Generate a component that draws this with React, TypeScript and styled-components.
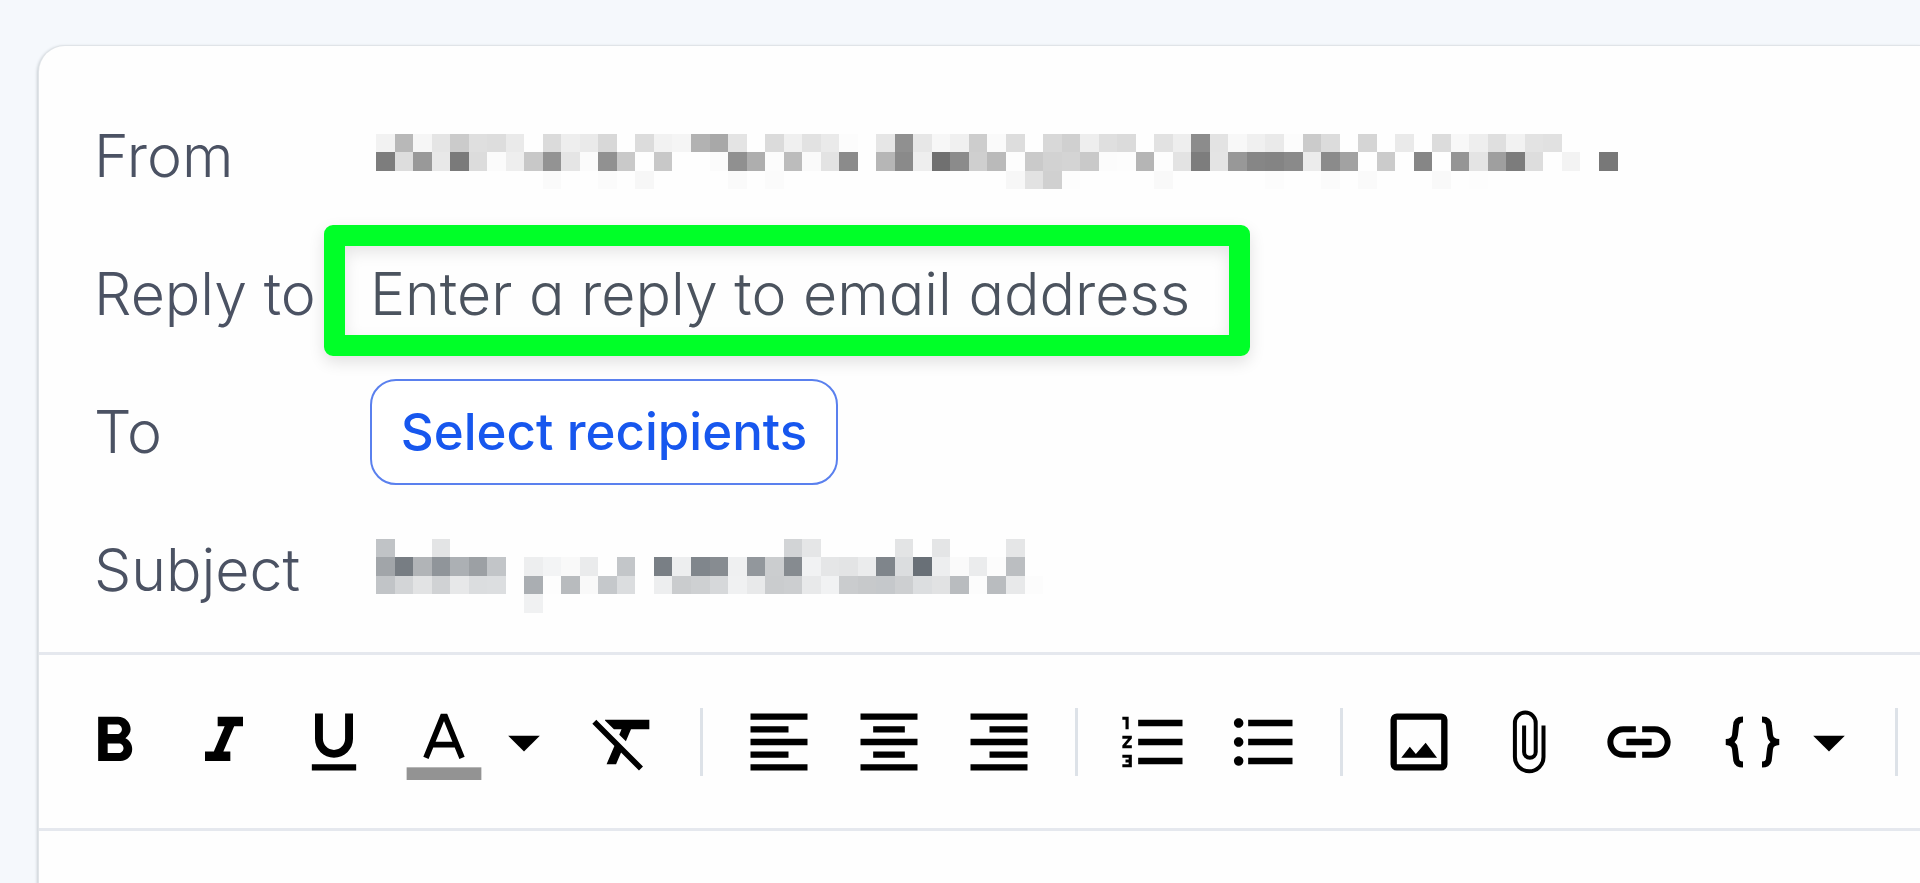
import React from 'react';
import styled, { createGlobalStyle } from 'styled-components';
import {
  MdArrowDropDown,
  MdFormatAlignCenter,
  MdFormatAlignLeft,
  MdFormatAlignRight,
  MdFormatBold,
  MdFormatClear,
  MdFormatItalic,
  MdFormatListBulleted,
  MdFormatListNumbered,
  MdFormatUnderlined,
  MdLink,
} from 'react-icons/md';

const GlobalStyle = createGlobalStyle`
  *, *::before, *::after { box-sizing: border-box; }
  body {
    margin: 0;
    background: #f5f8fc;
    font-family: Inter, "Open Sans", sans-serif;
    font-feature-settings: "cv11";
  }
`;

const Page = styled.main`
  min-height: 100vh;
  padding: 46px 0 0 39px;
  overflow: hidden;
  display: flex;
`;

const Composer = styled.form`
  flex: 1;
  min-width: 0;
  background: #fefefe;
  border-top-left-radius: 26px;
  box-shadow: 0 0 0 1px #e0e4e8, -1px 1px 3px 1px #c8ced3;
`;

const Fields = styled.div`
  padding: 41px 0 13px 55px;
  border-bottom: 3px solid #e5e8ee;
`;

const Field = styled.div`
  display: grid;
  grid-template-columns: 276px 1fr;
  align-items: center;
  height: 138px;
`;

const labelText = `
  font-size: 59px;
  font-weight: 300;
  line-height: 76px;
  white-space: nowrap;
`;

const FieldName = styled.span`
  ${labelText}
  color: #4b5263;
`;

const FieldLabel = styled.label`
  ${labelText}
  color: #4b5263;
`;

const Highlight = styled.div`
  position: relative;
  width: 838px;

  &::after {
    content: "";
    position: absolute;
    inset: -31px -42px -24px -46px;
    border: 21px solid #00ff28;
    border-radius: 9px;
    box-shadow: 0 6px 16px rgba(0, 0, 0, 0.12), inset 0 6px 16px rgba(0, 0, 0, 0.1);
    pointer-events: none;
  }
`;

const ReplyInput = styled.input`
  ${labelText}
  display: block;
  width: 100%;
  height: 76px;
  padding: 0;
  border: 0;
  outline: 0;
  background: transparent;
  font-family: inherit;
  font-feature-settings: inherit;
  color: #4b535e;

  &::placeholder {
    color: #4b535e;
    opacity: 1;
  }
`;

const RecipientsButton = styled.button`
  justify-self: start;
  width: 468px;
  height: 106px;
  padding: 0;
  border: 2px solid #5a80ee;
  border-radius: 26px;
  background: #fff;
  color: #1757ee;
  font-family: inherit;
  font-feature-settings: inherit;
  font-size: 51px;
  font-weight: 500;
  line-height: 64px;
  white-space: nowrap;
`;

const Mosaic = styled.svg`
  display: block;
  margin: 11px 0 0 6px;
`;

const Toolbar = styled.div`
  display: flex;
  align-items: center;
  gap: 34px;
  height: 176px;
  padding-left: 37px;
  overflow: hidden;
  border-bottom: 3px solid #e5e8ee;
`;

const Tool = styled.button`
  display: flex;
  flex: none;
  align-items: center;
  gap: 4px;
  padding: 0;
  border: 0;
  background: transparent;
  color: #000;

  svg {
    flex: none;
    width: 76px;
    height: 76px;
  }
`;

const Picker = styled(Tool)`
  margin-right: -10px;
`;

const Separator = styled.span`
  flex: none;
  width: 3px;
  height: 68px;
  margin: 0 4px;
  background: #dde2e8;
`;

const CELL = 18.53;
const ROW = 18.4;

// Each row lists one two-digit lightness value per cell.
const senderRows = [
  'f2b8f6e5cbdfddeaffdbeeead8ffdcf2f5b2a8e4ffdbf0e2eafcffe690e7f7f0cdfaddffd8d0eedfdbffe2ee8ce3f8f0eafccbdcffd5ffeaffdcf8eedff2e3e1ffffff',
  '7ddd99e87adcfbeec893e5fb91c9ffc8fffffb90aefcbcfae38bffb68aee708bcfbafdcad2d4c9fcfdb5fde37de4988684' +
    '8aec8ba2ffcbff86ff95e49f7cddfff3ff78',
  'fffffffffffffffffffafffffbfff7fffffffffafffbfffffffffffffffffffffffff7e2d0fdfffffffff9fffffffffffcfffffbfffafffffff9fffdffffffffffffff',
];

const subjectRows = [
  'c3ffffe4ffffffffffffffffffffffffffffffffffffd4e6ffffffffe4ffe5ffffffe6ff',
  'a57db495b0a0c5ffeef4f9ebffc6ff7fee868cf097cd8bf2e6e4ec85dd70eefaecfcbeff',
  'c4d5e3d2e8dddeffaefdbbf9c8ddffeeccd0d8f1e9cccee9f2ccc9c8cfdee2bcfcbce9fc',
  'fffffffffffffffff1ffffffffffffffffffffffffffffffffffffffffffffffffffffff',
];

type RedactedProps = { rows: string[]; label: string; cool?: boolean };

function Redacted({ rows, label, cool }: RedactedProps) {
  const columns = rows[0].length / 2;
  const width = Math.round(columns * CELL);
  const height = Math.round(rows.length * ROW);
  return (
    <Mosaic width={width} height={height} role="img" aria-label={label} shapeRendering="crispEdges">
      {rows.flatMap((row, y) =>
        (row.match(/../g) ?? []).map((hex, x) => {
          const v = parseInt(hex, 16);
          if (v > 253) return null;
          const tint = cool ? Math.round((255 - v) / 22) : 0;
          return (
            <rect
              key={`${x}-${y}`}
              x={x * CELL}
              y={y * ROW}
              width={CELL}
              height={ROW}
              fill={`rgb(${v - tint}, ${v}, ${v + tint})`}
            />
          );
        }),
      )}
    </Mosaic>
  );
}

const TextColorIcon = () => (
  <svg viewBox="0 0 24 24" fill="none" aria-hidden="true">
    <path d="M6.3 17 L11.6 4 H12.4 L17.7 17 M8.3 12.8 H15.7" stroke="currentColor" strokeWidth="1.8" />
    <rect x="0.2" y="20" width="23.6" height="4" fill="#939393" />
  </svg>
);

const PictureIcon = () => (
  <svg viewBox="0 0 24 24" fill="none" aria-hidden="true">
    <rect x="4" y="4" width="16" height="16" rx="1" stroke="currentColor" strokeWidth="2" />
    <path d="M6.4 17 L9.1 13.5 L11 15.8 L14.1 12.2 L17.7 17 Z" fill="currentColor" />
  </svg>
);

const PaperclipIcon = () => (
  <svg viewBox="0 0 76 76" fill="none" stroke="currentColor" strokeWidth="4" aria-hidden="true">
    <path d="M52.5 21.5 V53 A14.3 14.3 0 0 1 23.9 53 V19 A10.4 10.4 0 0 1 44.7 19 V48 A5.8 5.8 0 0 1 33.1 48 V21.5" />
  </svg>
);

const BracesIcon = () => (
  <svg viewBox="0 0 76 76" fill="none" stroke="currentColor" strokeWidth="6" aria-hidden="true">
    <path d="M32 15.5 C27 15.5 25 18 25 22 L24 31 C23.6 35 21 37.5 15 38 C21 38.5 23.6 41 24 45 L25 54 C25 58 27 60.5 32 60.5" />
    <path d="M51 15.5 C56 15.5 58 18 58 22 L59 31 C59.4 35 62 37.5 68 38 C62 38.5 59.4 41 59 45 L58 54 C58 58 56 60.5 51 60.5" />
  </svg>
);

type ToolButtonProps = { name: string; children: React.ReactNode };

const ToolButton = ({ name, children }: ToolButtonProps) => (
  <Tool type="button" aria-label={name}>
    {children}
  </Tool>
);

export default function App() {
  return (
    <>
      <GlobalStyle />
      <Page>
        <Composer>
          <Fields>
            <Field>
              <FieldName>From</FieldName>
              <Redacted rows={senderRows} label="Sender hidden" />
            </Field>
            <Field>
              <FieldLabel htmlFor="reply-to">Reply to</FieldLabel>
              <Highlight>
                <ReplyInput id="reply-to" type="email" placeholder="Enter a reply to email address" />
              </Highlight>
            </Field>
            <Field>
              <FieldLabel htmlFor="recipients">To</FieldLabel>
              <RecipientsButton id="recipients" type="button">
                Select recipients
              </RecipientsButton>
            </Field>
            <Field>
              <FieldName>Subject</FieldName>
              <Redacted rows={subjectRows} label="Subject hidden" cool />
            </Field>
          </Fields>
          <Toolbar role="toolbar" aria-label="Formatting">
            <ToolButton name="Bold"><MdFormatBold /></ToolButton>
            <ToolButton name="Italic"><MdFormatItalic /></ToolButton>
            <ToolButton name="Underline"><MdFormatUnderlined /></ToolButton>
            <Picker type="button" aria-label="Text color" aria-haspopup="menu">
              <TextColorIcon />
              <MdArrowDropDown />
            </Picker>
            <ToolButton name="Clear formatting"><MdFormatClear /></ToolButton>
            <Separator />
            <ToolButton name="Align left"><MdFormatAlignLeft /></ToolButton>
            <ToolButton name="Align center"><MdFormatAlignCenter /></ToolButton>
            <ToolButton name="Align right"><MdFormatAlignRight /></ToolButton>
            <Separator />
            <ToolButton name="Numbered list"><MdFormatListNumbered /></ToolButton>
            <ToolButton name="Bulleted list"><MdFormatListBulleted /></ToolButton>
            <Separator />
            <ToolButton name="Insert image"><PictureIcon /></ToolButton>
            <ToolButton name="Attach file"><PaperclipIcon /></ToolButton>
            <ToolButton name="Insert link"><MdLink /></ToolButton>
            <Picker type="button" aria-label="Insert variable" aria-haspopup="menu">
              <BracesIcon />
              <MdArrowDropDown />
            </Picker>
            <Separator />
          </Toolbar>
        </Composer>
      </Page>
    </>
  );
}
